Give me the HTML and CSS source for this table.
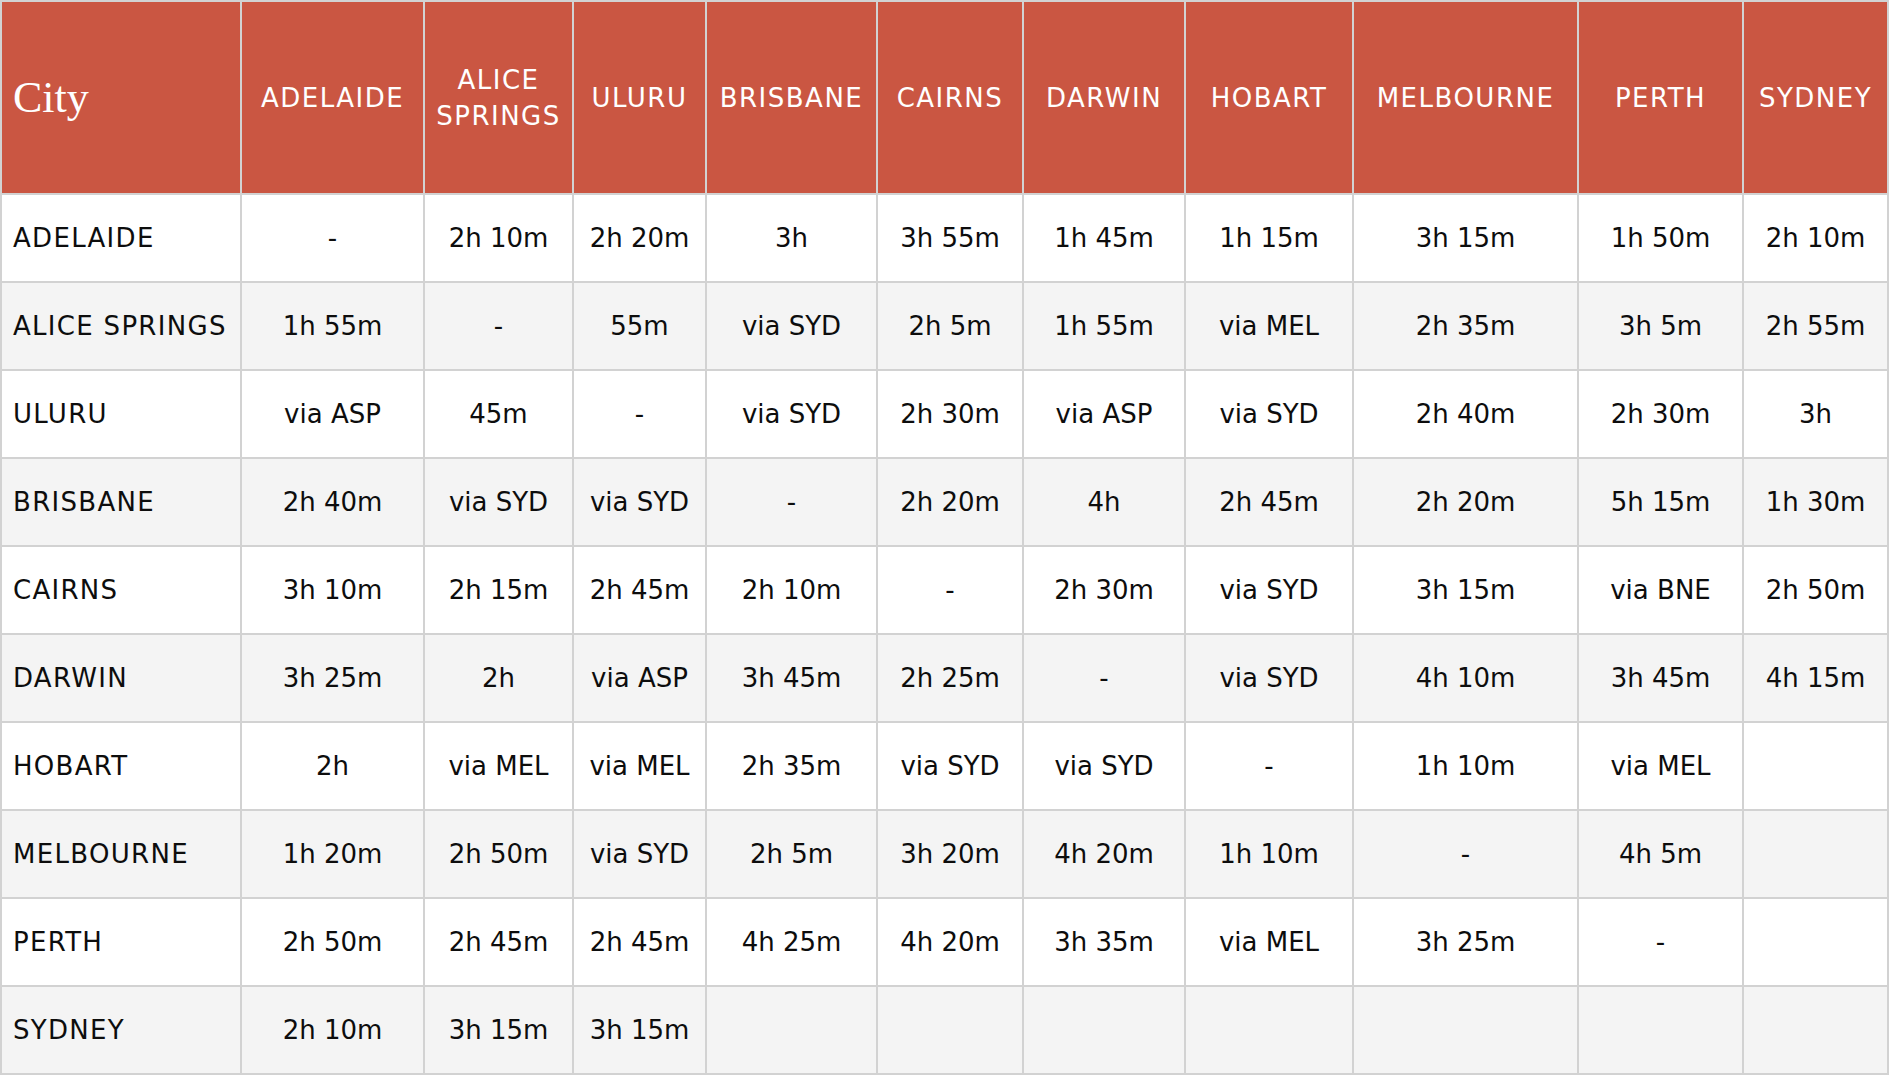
FILE: index.html
```html
<!DOCTYPE html>
<html>
<head>
<meta charset="utf-8">
<link rel="stylesheet" href="styles.css">
</head>
<body>
<table class="grid">
  <colgroup>
    <col class="c0"><col class="c1"><col class="c2"><col class="c3"><col class="c4"><col class="c5"><col class="c6"><col class="c7"><col class="c8"><col class="c9"><col class="c10">
  </colgroup>
  <thead>
    <tr>
      <th class="corner">City</th>
      <th>ADELAIDE</th>
      <th>ALICE<br>SPRINGS</th>
      <th>ULURU</th>
      <th>BRISBANE</th>
      <th>CAIRNS</th>
      <th>DARWIN</th>
      <th>HOBART</th>
      <th>MELBOURNE</th>
      <th>PERTH</th>
      <th>SYDNEY</th>
    </tr>
  </thead>
  <tbody>
    <tr><td class="city">ADELAIDE</td><td>-</td><td>2h 10m</td><td>2h 20m</td><td>3h</td><td>3h 55m</td><td>1h 45m</td><td>1h 15m</td><td>3h 15m</td><td>1h 50m</td><td>2h 10m</td></tr>
    <tr><td class="city">ALICE SPRINGS</td><td>1h 55m</td><td>-</td><td>55m</td><td>via SYD</td><td>2h 5m</td><td>1h 55m</td><td>via MEL</td><td>2h 35m</td><td>3h 5m</td><td>2h 55m</td></tr>
    <tr><td class="city">ULURU</td><td>via ASP</td><td>45m</td><td>-</td><td>via SYD</td><td>2h 30m</td><td>via ASP</td><td>via SYD</td><td>2h 40m</td><td>2h 30m</td><td>3h</td></tr>
    <tr><td class="city">BRISBANE</td><td>2h 40m</td><td>via SYD</td><td>via SYD</td><td>-</td><td>2h 20m</td><td>4h</td><td>2h 45m</td><td>2h 20m</td><td>5h 15m</td><td>1h 30m</td></tr>
    <tr><td class="city">CAIRNS</td><td>3h 10m</td><td>2h 15m</td><td>2h 45m</td><td>2h 10m</td><td>-</td><td>2h 30m</td><td>via SYD</td><td>3h 15m</td><td>via BNE</td><td>2h 50m</td></tr>
    <tr><td class="city">DARWIN</td><td>3h 25m</td><td>2h</td><td>via ASP</td><td>3h 45m</td><td>2h 25m</td><td>-</td><td>via SYD</td><td>4h 10m</td><td>3h 45m</td><td>4h 15m</td></tr>
    <tr><td class="city">HOBART</td><td>2h</td><td>via MEL</td><td>via MEL</td><td>2h 35m</td><td>via SYD</td><td>via SYD</td><td>-</td><td>1h 10m</td><td>via MEL</td><td></td></tr>
    <tr><td class="city">MELBOURNE</td><td>1h 20m</td><td>2h 50m</td><td>via SYD</td><td>2h 5m</td><td>3h 20m</td><td>4h 20m</td><td>1h 10m</td><td>-</td><td>4h 5m</td><td></td></tr>
    <tr><td class="city">PERTH</td><td>2h 50m</td><td>2h 45m</td><td>2h 45m</td><td>4h 25m</td><td>4h 20m</td><td>3h 35m</td><td>via MEL</td><td>3h 25m</td><td>-</td><td></td></tr>
    <tr><td class="city">SYDNEY</td><td>2h 10m</td><td>3h 15m</td><td>3h 15m</td><td></td><td></td><td></td><td></td><td></td><td></td><td></td></tr>
  </tbody>
</table>
</body>
</html>
```
FILE: styles.css
```css
html, body {
  margin: 0;
  padding: 0;
  background: #ffffff;
}

.grid {
  border-collapse: collapse;
  table-layout: fixed;
  width: 1889px;
  font-family: "DejaVu Sans", sans-serif;
  font-size: 26px;
  color: #0d0d0d;
}

.c0 { width: 240px; }
.c1 { width: 183px; }
.c2 { width: 149px; }
.c3 { width: 133px; }
.c4 { width: 171px; }
.c5 { width: 146px; }
.c6 { width: 162px; }
.c7 { width: 168px; }
.c8 { width: 225px; }
.c9 { width: 165px; }
.c10 { width: 145px; }

.grid th,
.grid td {
  border: 2px solid #d2d2d2;
  padding: 0;
  text-align: center;
  vertical-align: middle;
  white-space: nowrap;
}

.grid thead tr {
  height: 193px;
}

.grid th {
  background: #ca5642;
  color: #ffffff;
  font-weight: normal;
  line-height: 36px;
  letter-spacing: 1.5px;
}

.grid th.corner {
  text-align: left;
  padding-left: 11px;
  font-family: "Liberation Serif", serif;
  font-size: 44px;
  letter-spacing: 0;
}

.grid tbody tr {
  height: 88px;
}

.grid tbody tr:nth-child(odd) td {
  background: #ffffff;
}

.grid tbody tr:nth-child(even) td {
  background: #f4f4f4;
}

.grid td.city {
  text-align: left;
  padding-left: 11px;
  letter-spacing: 1.3px;
}
```
